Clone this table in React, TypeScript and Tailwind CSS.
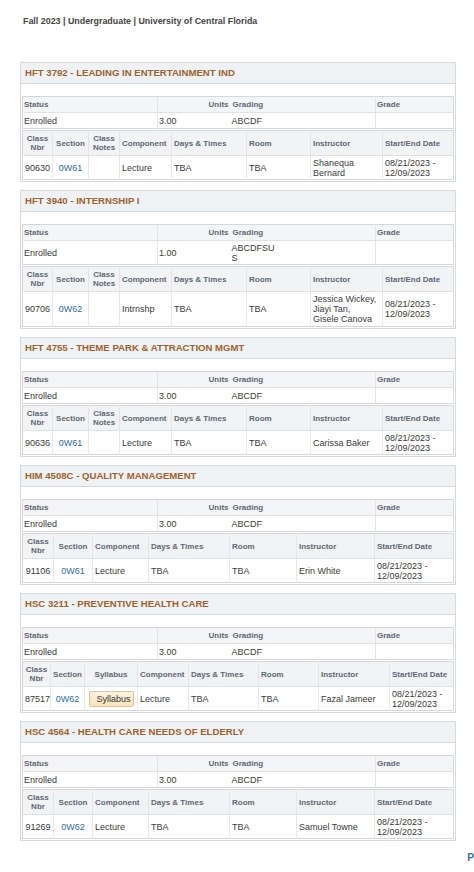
import React from 'react';

type Col = { label: string[]; w: string; center?: boolean };

interface Course {
  title: string;
  units: string;
  grading: React.ReactNode;
  cols: Col[];
  nbr: string;
  section: string;
  notes?: boolean;
  syllabus?: boolean;
  component: string;
  instructor: React.ReactNode;
  tall?: boolean;
}

const withNotes: Col[] = [
  { label: ['Class', 'Nbr'], w: 'w-[30px]', center: true },
  { label: ['Section'], w: 'w-[36px]', center: true },
  { label: ['Class', 'Notes'], w: 'w-[31px]', center: true },
  { label: ['Component'], w: 'w-[52px]' },
  { label: ['Days & Times'], w: 'w-[75px]' },
  { label: ['Room'], w: 'w-[64px]' },
  { label: ['Instructor'], w: 'w-[72px]' },
  { label: ['Start/End Date'], w: '' },
];

const noNotes: Col[] = [
  { label: ['Class', 'Nbr'], w: 'w-[31px]', center: true },
  { label: ['Section'], w: 'w-[39px]', center: true },
  { label: ['Component'], w: 'w-[56px]' },
  { label: ['Days & Times'], w: 'w-[81px]' },
  { label: ['Room'], w: 'w-[67px]' },
  { label: ['Instructor'], w: 'w-[78px]' },
  { label: ['Start/End Date'], w: '' },
];

const withSyllabus: Col[] = [
  { label: ['Class', 'Nbr'], w: 'w-[28px]', center: true },
  { label: ['Section'], w: 'w-[34px]', center: true },
  { label: ['Syllabus'], w: 'w-[53px]', center: true },
  { label: ['Component'], w: 'w-[51px]' },
  { label: ['Days & Times'], w: 'w-[70px]' },
  { label: ['Room'], w: 'w-[60px]' },
  { label: ['Instructor'], w: 'w-[71px]' },
  { label: ['Start/End Date'], w: '' },
];

const courses: Course[] = [
  {
    title: 'HFT 3792 - LEADING IN ENTERTAINMENT IND',
    units: '3.00',
    grading: 'ABCDF',
    cols: withNotes,
    nbr: '90630',
    section: '0W61',
    notes: true,
    component: 'Lecture',
    instructor: (<>Shanequa<br />Bernard</>),
  },
  {
    title: 'HFT 3940 - INTERNSHIP I',
    units: '1.00',
    grading: (<>ABCDFSU<br />S</>),
    cols: withNotes,
    nbr: '90706',
    section: '0W62',
    notes: true,
    component: 'Intrnshp',
    instructor: (<>Jessica Wickey,<br />Jiayi Tan,<br />Gisele Canova</>),
    tall: true,
  },
  {
    title: 'HFT 4755 - THEME PARK & ATTRACTION MGMT',
    units: '3.00',
    grading: 'ABCDF',
    cols: withNotes,
    nbr: '90636',
    section: '0W61',
    notes: true,
    component: 'Lecture',
    instructor: 'Carissa Baker',
  },
  {
    title: 'HIM 4508C - QUALITY MANAGEMENT',
    units: '3.00',
    grading: 'ABCDF',
    cols: noNotes,
    nbr: '91106',
    section: '0W61',
    component: 'Lecture',
    instructor: 'Erin White',
  },
  {
    title: 'HSC 3211 - PREVENTIVE HEALTH CARE',
    units: '3.00',
    grading: 'ABCDF',
    cols: withSyllabus,
    nbr: '87517',
    section: '0W62',
    syllabus: true,
    component: 'Lecture',
    instructor: 'Fazal Jameer',
  },
  {
    title: 'HSC 4564 - HEALTH CARE NEEDS OF ELDERLY',
    units: '3.00',
    grading: 'ABCDF',
    cols: noNotes,
    nbr: '91269',
    section: '0W62',
    component: 'Lecture',
    instructor: 'Samuel Towne',
  },
];

const label = 'text-[8px] font-bold text-[#5d6974] leading-[9px]';
const cell = 'text-[9px] text-[#3a3a3a] leading-[10px]';

const CourseCard: React.FC<{ c: Course }> = ({ c }) => {
  const dataCells: React.ReactNode[] = [
    c.nbr,
    <span className="text-[#2f6ca6]">{c.section}</span>,
  ];
  if (c.notes) dataCells.push('');
  if (c.syllabus)
    dataCells.push(
      <span className="inline-block w-[45px] h-[16px] leading-[14px] text-right pr-[2px] rounded-[2px] border border-[#dcc39a] bg-gradient-to-b from-[#fdf3e0] to-[#f7e2bb] text-[#333]">
        Syllabus
      </span>
    );
  dataCells.push(c.component, 'TBA', 'TBA', c.instructor, (<>08/21/2023 -<br />12/09/2023</>));

  return (
    <div className="border border-[#d6dbdf] bg-white">
      {/* title bar */}
      <div className="h-[21px] flex items-center px-[4px] bg-[#eef2f5] border-b border-[#d3d9de] text-[9.6px] font-bold text-[#9f622d]">
        {c.title}
      </div>

      <div className="pt-[12px] px-[1px] pb-[1px]">
        {/* status table */}
        <table className="w-full table-fixed border-collapse border border-[#d4d8dc]">
          <colgroup>
            <col className="w-[135px]" />
            <col className="w-[73px]" />
            <col className="w-[145px]" />
            <col />
          </colgroup>
          <tbody>
            <tr className="h-[16px] bg-[#f4f5f6]">
              <td className={`${label} px-[1px]`}>Status</td>
              <td className={`${label} px-[2px] text-right border-l border-[#e0e3e6]`}>Units</td>
              <td className={`${label} px-[2px]`}>Grading</td>
              <td className={`${label} px-[1px] border-l border-[#e0e3e6]`}>Grade</td>
            </tr>
            <tr className={`${c.tall ? 'h-[24px]' : 'h-[16px]'} border-t border-[#e0e3e6]`}>
              <td className={`${cell} px-[1px]`}>Enrolled</td>
              <td className={`${cell} px-[1px] border-l border-[#e6e8ea]`}>{c.units}</td>
              <td className={`${cell} px-[1px]`}>{c.grading}</td>
              <td className={`${cell} border-l border-[#e0e3e6]`}></td>
            </tr>
          </tbody>
        </table>

        {/* class table */}
        <table className="mt-[1px] w-full table-fixed border-collapse border border-[#d4d8dc]">
          <colgroup>
            {c.cols.map((col, i) => (
              <col key={i} className={col.w} />
            ))}
          </colgroup>
          <tbody>
            <tr className="h-[25px] bg-[#f1f3f5]">
              {c.cols.map((col, i) => (
                <td
                  key={i}
                  className={`${label} px-[2px] ${col.center ? 'text-center' : 'text-left'} ${i > 0 ? 'border-l border-[#e2e5e8]' : ''}`}
                >
                  {col.label.map((l, j) => (
                    <div key={j}>{l}</div>
                  ))}
                </td>
              ))}
            </tr>
            <tr className={`${c.tall ? 'h-[35px]' : 'h-[24px]'} border-t border-[#dfe2e5]`}>
              {dataCells.map((d, i) => (
                <td
                  key={i}
                  className={`${cell} px-[2px] ${c.cols[i].center ? 'text-center' : 'text-left'} ${i > 0 ? 'border-l border-[#e6e8ea]' : ''}`}
                >
                  {d}
                </td>
              ))}
            </tr>
          </tbody>
        </table>
      </div>
    </div>
  );
};

export default function App() {
  return (
    <div className="w-[474px] min-h-[872px] bg-white overflow-hidden font-['Liberation_Sans',Arial,sans-serif]">
      <div className="pl-[23px] pt-[16px] text-[8.9px] leading-[11px] font-bold text-[#444]">
        Fall 2023 | Undergraduate | University of Central Florida
      </div>

      <div className="mt-[35px] ml-[20px] w-[436px] flex flex-col gap-[8px]">
        {courses.map((c) => (
          <CourseCard key={c.title} c={c} />
        ))}
      </div>

      <div className="mt-[11px] flex justify-end">
        <span className="text-[10px] font-bold text-[#3b6d9e] leading-[12px]">P</span>
      </div>
    </div>
  );
}
